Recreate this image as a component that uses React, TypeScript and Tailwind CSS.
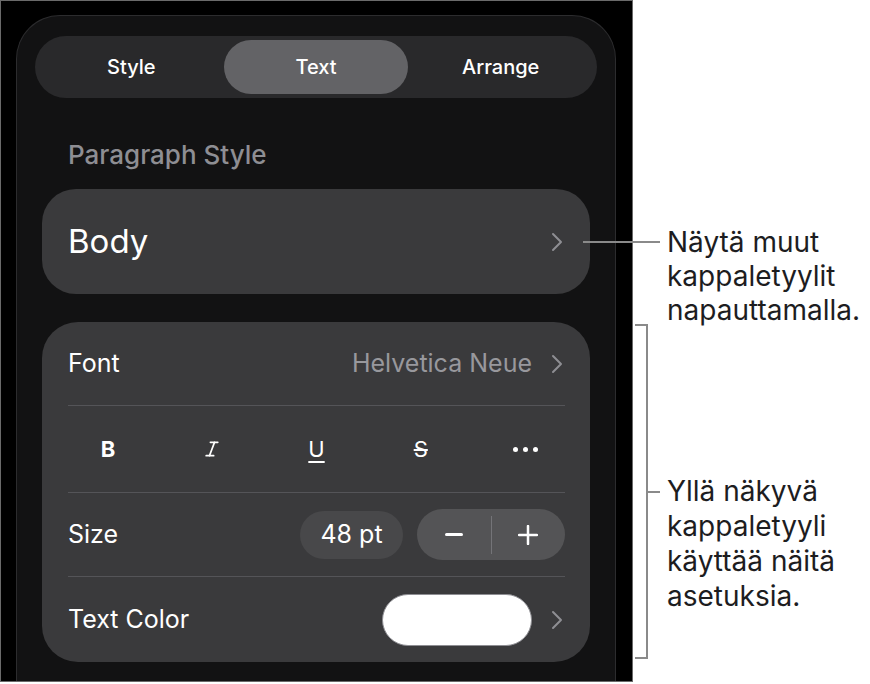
import React from "react";
import { Italic } from "lucide-react";

const Chevron = ({ color = "#8e8e93" }: { color?: string }) => (
  <svg width="12" height="20" viewBox="0 0 12 20" fill="none">
    <polyline points="2,2 10,10 2,18" stroke={color} strokeWidth="2" strokeLinecap="round" strokeLinejoin="round" />
  </svg>
);

export default function App() {
  const font = { fontFamily: "Inter, 'Noto Sans', sans-serif" };
  return (
    <div className="relative w-[870px] h-[684px] bg-white overflow-hidden" style={font}>
      {/* Frame */}
      <div className="w-[633px] h-[682px] border border-[#6a6a6a] bg-black flex flex-col">
        <div className="ml-[15px] mt-[14px] w-[600px] flex-1 rounded-t-[44px] border border-b-0 border-[#2c2c2e] bg-[#121213] flex flex-col">
          {/* Tabs */}
          <div className="mx-[18px] mt-[20px] h-[62px] rounded-full bg-[#29292b] p-[4px] grid grid-cols-3">
            <div className="flex items-center justify-center text-[20px] font-medium text-white">Style</div>
            <div className="flex items-center justify-center rounded-full bg-[#636366] text-[20px] font-medium text-white">Text</div>
            <div className="flex items-center justify-center text-[20px] font-medium text-white">Arrange</div>
          </div>

          <div className="pl-[51px] mt-[41px] h-[30px] flex items-center text-[26px] font-medium text-[#8e8e93]">
            Paragraph Style
          </div>

          {/* Body card */}
          <div className="mx-[25px] mt-[20px] h-[105px] rounded-[34px] bg-[#3a3a3c] flex items-center justify-between pl-[26px] pr-[27px]">
            <span className="text-[33px] text-white">Body</span>
            <Chevron />
          </div>

          {/* Settings card */}
          <div className="mx-[25px] mt-[28px] h-[340px] rounded-[36px] bg-[#3a3a3c] pl-[26px] pr-[25px] flex flex-col">
            <div className="h-[84px] border-b border-[#545458] flex items-center justify-between">
              <span className="text-[25px] text-white">Font</span>
              <div className="flex items-center gap-[19px] pr-[2px]">
                <span className="text-[25px] text-[#98989d]">Helvetica Neue</span>
                <Chevron />
              </div>
            </div>
            <div className="h-[87px] border-b border-[#545458] flex items-center justify-between px-[30px]">
              <span className="w-[20px] flex justify-center text-[22px] font-bold text-white">B</span>
              <span className="w-[20px] flex justify-center text-white">
                <Italic size={22} strokeWidth={2} />
              </span>
              <span className="w-[20px] flex justify-center text-[22px] text-white underline underline-offset-[4px] decoration-[2px]">U</span>
              <span className="w-[20px] flex justify-center text-[22px] text-white line-through decoration-[2px]">S</span>
              <span className="w-[20px] flex justify-center items-center gap-[5px]">
                <span className="shrink-0 w-[5px] h-[5px] rounded-full bg-white" />
                <span className="shrink-0 w-[5px] h-[5px] rounded-full bg-white" />
                <span className="shrink-0 w-[5px] h-[5px] rounded-full bg-white" />
              </span>
            </div>
            <div className="h-[84px] border-b border-[#545458] flex items-center justify-between">
              <span className="text-[25px] text-white">Size</span>
              <div className="flex items-center gap-[14px]">
                <div className="w-[103px] h-[48px] rounded-full bg-[#48484a] flex items-center justify-center text-[25px] text-white">
                  48 pt
                </div>
                <div className="w-[148px] h-[51px] rounded-full bg-[#545456] flex items-center">
                  <div className="flex-1 flex items-center justify-center">
                    <div className="w-[18px] h-[2.5px] bg-white rounded" />
                  </div>
                  <div className="w-[1px] h-[38px] bg-[#747478]" />
                  <div className="flex-1 flex items-center justify-center">
                    <svg width="20" height="20" viewBox="0 0 20 20">
                      <line x1="10" y1="1" x2="10" y2="19" stroke="white" strokeWidth="2.5" strokeLinecap="round" />
                      <line x1="1" y1="10" x2="19" y2="10" stroke="white" strokeWidth="2.5" strokeLinecap="round" />
                    </svg>
                  </div>
                </div>
              </div>
            </div>
            <div className="flex-1 flex items-center justify-between">
              <span className="text-[25px] text-white">Text Color</span>
              <div className="flex items-center gap-[19px] pr-[2px]">
                <div className="w-[150px] h-[52px] rounded-full bg-white border border-[#8e8e93]" />
                <Chevron />
              </div>
            </div>
          </div>
        </div>
      </div>

      {/* Callout 1 */}
      <div className="absolute left-[583px] top-[241px] w-[77px] h-[2px] bg-[#8a8a8a]" />
      <div className="absolute left-[667px] top-[225px] text-[28px] leading-[34px] text-[#1d1d1f]">
        <div>Näytä muut</div>
        <div>kappaletyylit</div>
        <div>napauttamalla.</div>
      </div>

      {/* Callout 2 bracket */}
      <div className="absolute left-[635px] top-[324px] w-[13px] h-[2px] bg-[#8a8a8a]" />
      <div className="absolute left-[646px] top-[324px] w-[2px] h-[335px] bg-[#8a8a8a]" />
      <div className="absolute left-[635px] top-[657px] w-[13px] h-[2px] bg-[#8a8a8a]" />
      <div className="absolute left-[646px] top-[491px] w-[14px] h-[2px] bg-[#8a8a8a]" />
      <div className="absolute left-[667px] top-[474px] text-[28px] leading-[35px] text-[#1d1d1f]">
        <div>Yllä näkyvä</div>
        <div>kappaletyyli</div>
        <div>käyttää näitä</div>
        <div>asetuksia.</div>
      </div>
    </div>
  );
}
